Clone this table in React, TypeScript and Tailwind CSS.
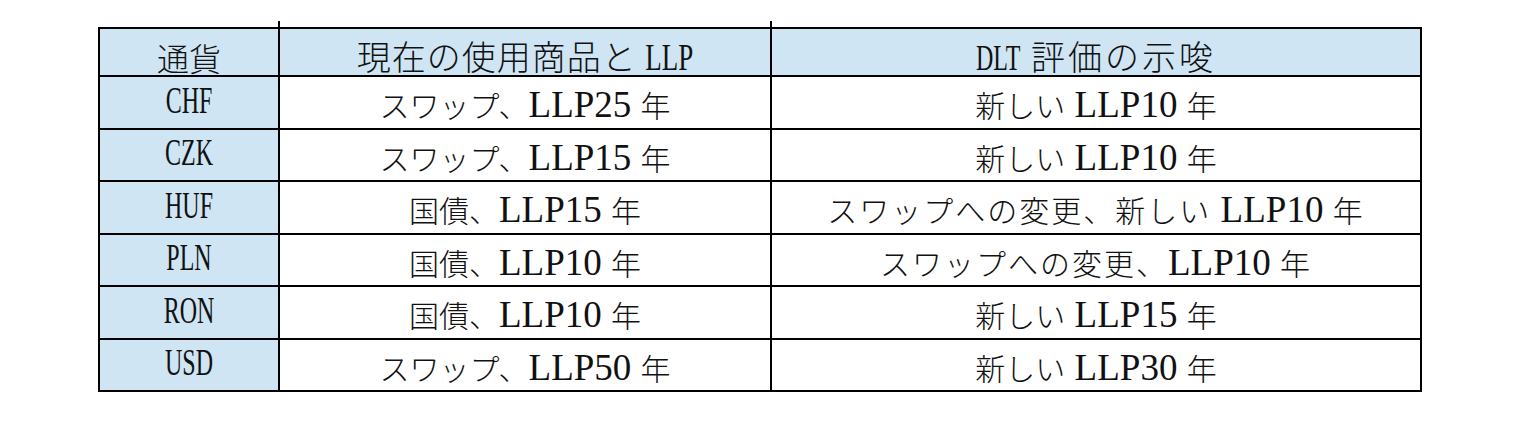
import React from 'react';

interface Row {
  code: string;
  current: string;
  dlt: string;
  spread?: boolean;
}

const rows: Row[] = [
  { code: 'CHF', current: 'スワップ、LLP25 年', dlt: '新しい LLP10 年' },
  { code: 'CZK', current: 'スワップ、LLP15 年', dlt: '新しい LLP10 年' },
  { code: 'HUF', current: '国債、LLP15 年', dlt: 'スワップへの変更、新しい LLP10 年', spread: true },
  { code: 'PLN', current: '国債、LLP10 年', dlt: 'スワップへの変更、LLP10 年', spread: true },
  { code: 'RON', current: '国債、LLP10 年', dlt: '新しい LLP15 年' },
  { code: 'USD', current: 'スワップ、LLP50 年', dlt: '新しい LLP30 年' },
];

const cjkFont = 'font-[Noto_Sans_CJK_JP,sans-serif]';
const serifFont = 'font-[Liberation_Serif,Noto_Sans_CJK_JP,serif]';

// Split a label into latin / cjk runs so each can get its own size
function MixedText({ text, spread }: { text: string; spread?: boolean }) {
  const parts = text.split(/([A-Za-z0-9 ]+)/).filter(Boolean);
  return (
    <span className="whitespace-nowrap leading-none">
      {parts.map((p, i) =>
        /[A-Za-z0-9]/.test(p) ? (
          <span key={i} className={`${serifFont} text-[37px] whitespace-pre`}>
            {p}
          </span>
        ) : (
          <span key={i} className={`${cjkFont} font-light text-[30px] ${spread ? 'tracking-[2px]' : ''}`}>
            {p}
          </span>
        )
      )}
    </span>
  );
}

// Condensed latin, like the half-width mincho glyphs of the source
function Narrow({ children, size }: { children: React.ReactNode; size: 'code' | 'dlt' | 'llp' }) {
  const cls =
    size === 'code'
      ? 'text-[24px] scale-y-[1.55]'
      : size === 'dlt'
        ? 'text-[24px] scale-y-[1.45]'
        : 'text-[27px] scale-y-[1.38]';
  return <span className={`${serifFont} inline-block leading-none origin-[center_84%] ${cls}`}>{children}</span>;
}

function Cell({
  children,
  blue,
  tick,
  className = '',
}: {
  children: React.ReactNode;
  blue?: boolean;
  tick?: boolean;
  className?: string;
}) {
  return (
    <div
      className={`relative flex items-center justify-center border-r-2 border-b-2 border-black text-[#111] ${
        blue ? 'bg-[#cfe5f3]' : 'bg-white'
      } ${className}`}
    >
      {/* the column rules poke a little above the top border */}
      {tick && <span className="absolute -right-[2px] -top-[8px] h-[7px] w-[2px] bg-black" />}
      {children}
    </div>
  );
}

export default function App() {
  return (
    <div className="w-[1535px] h-[422px] bg-white pt-[27px] pl-[98px]">
      <div className="grid w-[1324px] grid-cols-[180px_492px_650px] border-t-2 border-l-2 border-black">
        {/* Header */}
        <Cell blue tick className="h-[48px] pt-[9px]">
          <span className={`${cjkFont} font-light text-[32px] leading-none`}>通貨</span>
        </Cell>
        <Cell blue tick className="h-[48px] pt-[9px]">
          <span className="whitespace-nowrap leading-none">
            <span className={`${cjkFont} font-light text-[34px] tracking-[1px]`}>現在の使用商品と </span>
            <Narrow size="llp">LLP</Narrow>
          </span>
        </Cell>
        <Cell blue className="h-[48px] pt-[9px]">
          <span className="whitespace-nowrap leading-none">
            <Narrow size="dlt">DLT</Narrow>
            <span className={`${cjkFont} font-light text-[34px] tracking-[3px]`}> 評価の示唆</span>
          </span>
        </Cell>

        {/* Body */}
        {rows.map((r, i) => {
          const h = i % 2 === 0 ? 'h-[53px]' : 'h-[52px]';
          return (
            <React.Fragment key={r.code}>
              <Cell blue className={`${h} pt-[4px]`}>
                <Narrow size="code">{r.code}</Narrow>
              </Cell>
              <Cell className={`${h} pt-[4px]`}>
                <MixedText text={r.current} />
              </Cell>
              <Cell className={`${h} pt-[4px]`}>
                <MixedText text={r.dlt} spread={r.spread} />
              </Cell>
            </React.Fragment>
          );
        })}
      </div>
    </div>
  );
}
